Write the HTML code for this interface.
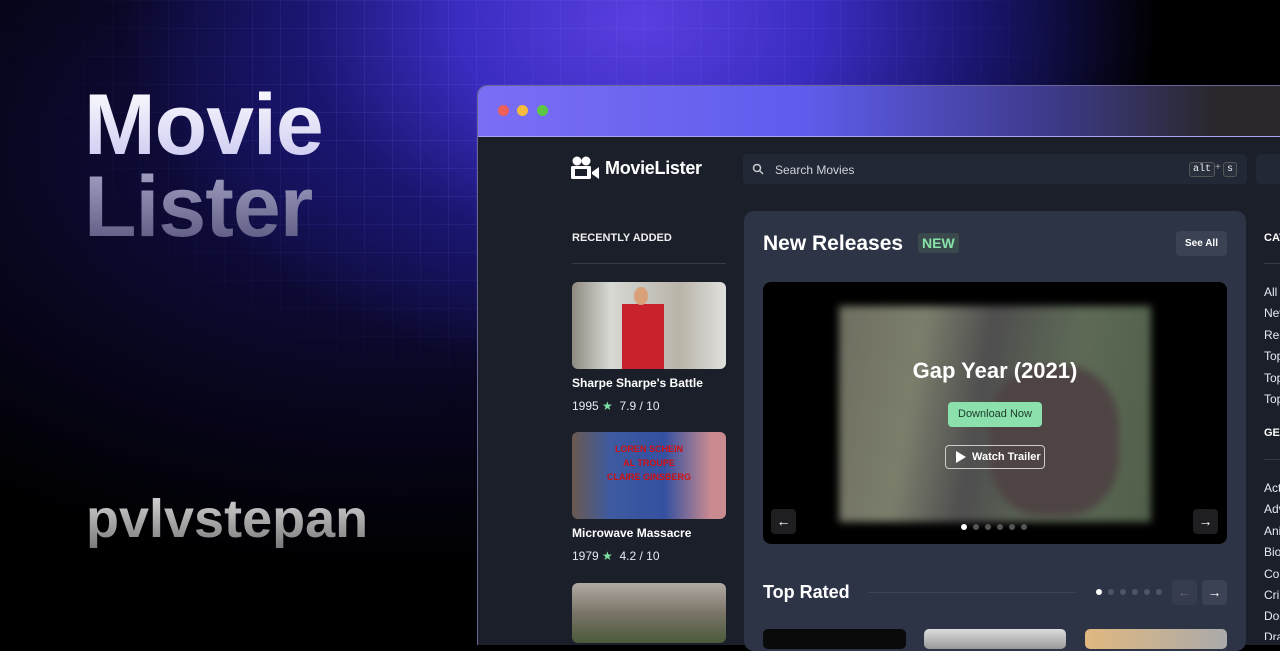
<!DOCTYPE html>
<html><head><meta charset="utf-8"><style>
*{margin:0;padding:0;box-sizing:border-box}
body{width:1280px;height:640px;overflow:hidden;position:relative;background:#000;font-family:"Liberation Sans",sans-serif}
.bg{position:absolute;inset:0;background:
radial-gradient(ellipse 520px 360px at 640px 20px,#5a3fe0 0%,#3a2cc0 35%,#1a1670 65%,rgba(10,8,40,0) 100%),
radial-gradient(ellipse 700px 420px at 400px 150px,#141055 0%,#08061e 60%,#000 100%);}
.grid{position:absolute;inset:0;background-image:linear-gradient(rgba(120,120,255,.12) 1px,transparent 1px),linear-gradient(90deg,rgba(120,120,255,.12) 1px,transparent 1px);background-size:28px 28px;-webkit-mask-image:radial-gradient(ellipse 700px 420px at 560px 80px,#000 30%,transparent 80%);}
.t1{position:absolute;left:84px;top:80px;font-size:86px;font-weight:bold;line-height:90px;letter-spacing:-1px;background:linear-gradient(#fff,#c8c6f0);-webkit-background-clip:text;color:transparent}
.t2{position:absolute;left:84px;top:162px;font-size:86px;font-weight:bold;line-height:90px;letter-spacing:-1px;background:linear-gradient(#a8a6c8,#55537a);-webkit-background-clip:text;color:transparent}
.t3{position:absolute;left:86px;top:488px;font-size:54px;font-weight:bold;line-height:62px;background:linear-gradient(#e0e0e0,#777);-webkit-background-clip:text;color:transparent}
.win{position:absolute;left:477px;top:85px;width:820px;height:560px;border-radius:10px 0 0 0;overflow:hidden;border:1px solid rgba(180,170,255,.5);border-right:none;border-bottom:none;background:#1b1f2a}
.bar{height:51px;background:linear-gradient(90deg,#7a6ef5 0%,#5f5cec 40%,#3d3a8a 70%,#2a282c 90%);border-bottom:1px solid #a9a2f5}
.dot{position:absolute;top:19px;width:11px;height:11px;border-radius:50%}
.a{position:absolute;color:#fff}
.card{position:absolute;background:#2d3446;border-radius:10px}
.sm{font-size:12px;color:#e8eaf0}
</style></head><body>
<div class="bg"></div><div class="grid"></div>
<div class="t1">Movie</div><div class="t2">Lister</div><div class="t3">pvlvstepan</div>
<div class="win">
<div class="bar"></div>
<div class="dot" style="left:20px;background:#ee5f57"></div>
<div class="dot" style="left:39px;background:#f5bb3c"></div>
<div class="dot" style="left:59px;background:#5dc645"></div>
</div>
<svg class="a" style="left:571px;top:156px" width="30" height="24" viewBox="0 0 30 24"><circle cx="6" cy="5" r="4.5" fill="#fff"/><circle cx="15" cy="5" r="4.5" fill="#fff"/><rect x="0" y="10" width="20" height="13" rx="1.5" fill="#fff"/><rect x="4" y="13" width="12" height="7" fill="#1b1f2a"/><path d="M21 16l7-5v12l-7-5z" fill="#fff"/></svg>
<div class="a" style="left:605px;top:158px;font-size:18px;font-weight:bold;letter-spacing:-.3px">MovieLister</div>
<div class="a" style="left:743px;top:154px;width:504px;height:30px;background:#232836;border-radius:4px"></div>
<svg class="a" style="left:752px;top:163px" width="12" height="12" viewBox="0 0 12 12"><circle cx="5" cy="5" r="3.5" stroke="#ccc" stroke-width="1.5" fill="none"/><path d="M7.5 7.5L11 11" stroke="#ccc" stroke-width="1.5"/></svg>
<div class="a sm" style="left:775px;top:163px;color:#d0d3da">Search Movies</div>
<div class="a" style="left:1189px;top:162px;font-size:10px;font-family:'Liberation Mono',monospace;border:1px solid #555;border-radius:3px;padding:0 3px;background:#2a2f3c;color:#eee;line-height:13px">alt</div>
<div class="a" style="left:1215px;top:162px;font-size:10px;color:#aaa">+</div>
<div class="a" style="left:1223px;top:162px;font-size:10px;font-family:'Liberation Mono',monospace;border:1px solid #555;border-radius:3px;padding:0 3px;background:#2a2f3c;color:#eee;line-height:13px">s</div>
<div class="a" style="left:1256px;top:154px;width:40px;height:30px;background:#232836;border-radius:4px"></div>
<div class="a" style="left:572px;top:232px;font-size:11px;font-weight:bold;color:#eee">RECENTLY ADDED</div>
<div class="a" style="left:572px;top:263px;width:154px;height:1px;background:#363b48"></div>
<div class="a" style="left:572px;top:282px;width:154px;height:87px;border-radius:6px;background:linear-gradient(90deg,#8d8a80 0%,#d8d8d4 25%,#c8c7c0 45%,#b8b4a8 70%,#e0e0de 100%);overflow:hidden"><div style="position:absolute;left:50px;top:22px;width:42px;height:65px;background:#c8222c"></div><div style="position:absolute;left:62px;top:5px;width:14px;height:18px;border-radius:50%;background:#d9a07a"></div></div>
<div class="a" style="left:572px;top:376px;font-size:12px;font-weight:bold">Sharpe Sharpe's Battle</div>
<div class="a sm" style="left:572px;top:399px">1995 <span style="color:#7ee0a0">★</span> &nbsp;7.9 / 10</div>
<div class="a" style="left:572px;top:432px;width:154px;height:87px;border-radius:6px;background:linear-gradient(90deg,#6a5a50 0%,#3e5aa0 25%,#3450a0 60%,#c98a90 90%);overflow:hidden;text-align:center;color:#d01010;font-size:9px;font-weight:bold;line-height:14px;padding-top:10px">LOREN SCHEIN<br>AL TROUPE<br>CLAIRE GINSBERG</div>
<div class="a" style="left:572px;top:526px;font-size:12px;font-weight:bold">Microwave Massacre</div>
<div class="a sm" style="left:572px;top:549px">1979 <span style="color:#7ee0a0">★</span> &nbsp;4.2 / 10</div>
<div class="a" style="left:572px;top:583px;width:154px;height:60px;border-radius:6px;background:linear-gradient(#b0aaa4,#7a7468 50%,#4a5a3a)"></div>
<div class="card" style="left:744px;top:211px;width:502px;height:440px"></div>
<div class="a" style="left:763px;top:232px;font-size:21px;font-weight:bold">New Releases</div>
<div class="a" style="left:918px;top:233px;background:#3a4a4c;color:#86e2a8;font-size:14px;font-weight:bold;padding:2px 4px;border-radius:3px">NEW</div>
<div class="a" style="left:1176px;top:231px;width:51px;height:25px;background:#3b4253;border-radius:4px;font-size:10px;font-weight:bold;text-align:center;line-height:25px">See All</div>
<div class="a" style="left:763px;top:282px;width:464px;height:262px;background:#000;border-radius:8px;overflow:hidden">
<div style="position:absolute;left:76px;top:24px;width:312px;height:216px;background:linear-gradient(100deg,#6e6e60 0%,#7c7e6c 25%,#4e4e4e 45%,#5e6a56 70%,#50604a 100%);filter:blur(4px)"><div style="position:absolute;left:150px;top:60px;width:130px;height:150px;background:#4e4444;border-radius:40%"></div></div>
</div>
<div class="a" style="left:763px;top:358px;width:464px;text-align:center;font-size:22px;font-weight:bold">Gap Year (2021)</div>
<div class="a" style="left:948px;top:402px;width:94px;height:25px;background:#8ce0ac;border-radius:4px;color:#1e3a2a;font-size:11px;text-align:center;line-height:25px">Download Now</div>
<div class="a" style="left:945px;top:445px;width:100px;height:24px;border:1px solid #ccc;border-radius:4px;font-size:11px;font-weight:bold;line-height:22px;padding-left:26px;white-space:nowrap">Watch Trailer</div>
<svg class="a" style="left:955px;top:451px" width="12" height="12"><path d="M1 0L11 6L1 12Z" fill="#fff"/></svg>
<div class="a" style="left:771px;top:509px;width:25px;height:25px;background:#1f1f22;border-radius:4px;text-align:center;line-height:24px;font-size:14px;font-weight:bold">←</div>
<div class="a" style="left:1193px;top:509px;width:25px;height:25px;background:#1f1f22;border-radius:4px;text-align:center;line-height:24px;font-size:14px;font-weight:bold">→</div>
<svg class="a" style="left:958px;top:523px" width="74" height="8"><circle cx="6" cy="4" r="3" fill="#fff"/><circle cx="18" cy="4" r="3" fill="#555"/><circle cx="30" cy="4" r="3" fill="#555"/><circle cx="42" cy="4" r="3" fill="#555"/><circle cx="54" cy="4" r="3" fill="#555"/><circle cx="66" cy="4" r="3" fill="#555"/></svg>
<div class="a" style="left:763px;top:582px;font-size:18px;font-weight:bold">Top Rated</div>
<div class="a" style="left:868px;top:592px;width:207px;height:1px;background:#3e4557"></div>
<svg class="a" style="left:1093px;top:588px" width="74" height="8"><circle cx="6" cy="4" r="3" fill="#fff"/><circle cx="18" cy="4" r="3" fill="#4e5566"/><circle cx="30" cy="4" r="3" fill="#4e5566"/><circle cx="42" cy="4" r="3" fill="#4e5566"/><circle cx="54" cy="4" r="3" fill="#4e5566"/><circle cx="66" cy="4" r="3" fill="#4e5566"/></svg>
<div class="a" style="left:1172px;top:580px;width:25px;height:25px;background:#353c4d;border-radius:4px;text-align:center;line-height:24px;font-size:14px;color:#667">←</div>
<div class="a" style="left:1202px;top:580px;width:25px;height:25px;background:#3b4253;border-radius:4px;text-align:center;line-height:24px;font-size:14px;font-weight:bold">→</div>
<div class="a" style="left:763px;top:629px;width:143px;height:20px;background:#0a0a0a;border-radius:5px"></div>
<div class="a" style="left:924px;top:629px;width:142px;height:20px;background:linear-gradient(#ddd,#999);border-radius:5px"></div>
<div class="a" style="left:1085px;top:629px;width:142px;height:20px;background:linear-gradient(90deg,#e0b880,#aaa);border-radius:5px"></div>
<div style="position:absolute;left:1264px;top:0;width:16px;height:640px;overflow:hidden;color:#e8eaf0;font-size:12px">
<div style="position:absolute;top:232px;font-size:11px;font-weight:bold;color:#fff">CATEGORIES</div>
<div style="position:absolute;top:263px;width:40px;height:1px;background:#363b48"></div>
<div style="position:absolute;top:285px">All</div><div style="position:absolute;top:306px">New</div><div style="position:absolute;top:328px">Recent</div><div style="position:absolute;top:349px">Top</div><div style="position:absolute;top:371px">Top</div><div style="position:absolute;top:392px">Top</div>
<div style="position:absolute;top:427px;font-size:11px;font-weight:bold;color:#fff">GENRES</div>
<div style="position:absolute;top:459px;width:40px;height:1px;background:#363b48"></div>
<div style="position:absolute;top:481px">Action</div><div style="position:absolute;top:502px">Adventure</div><div style="position:absolute;top:524px">Animation</div><div style="position:absolute;top:545px">Biography</div><div style="position:absolute;top:567px">Comedy</div><div style="position:absolute;top:588px">Crime</div><div style="position:absolute;top:609px">Documentary</div><div style="position:absolute;top:630px">Drama</div>
</div>
</body></html>
